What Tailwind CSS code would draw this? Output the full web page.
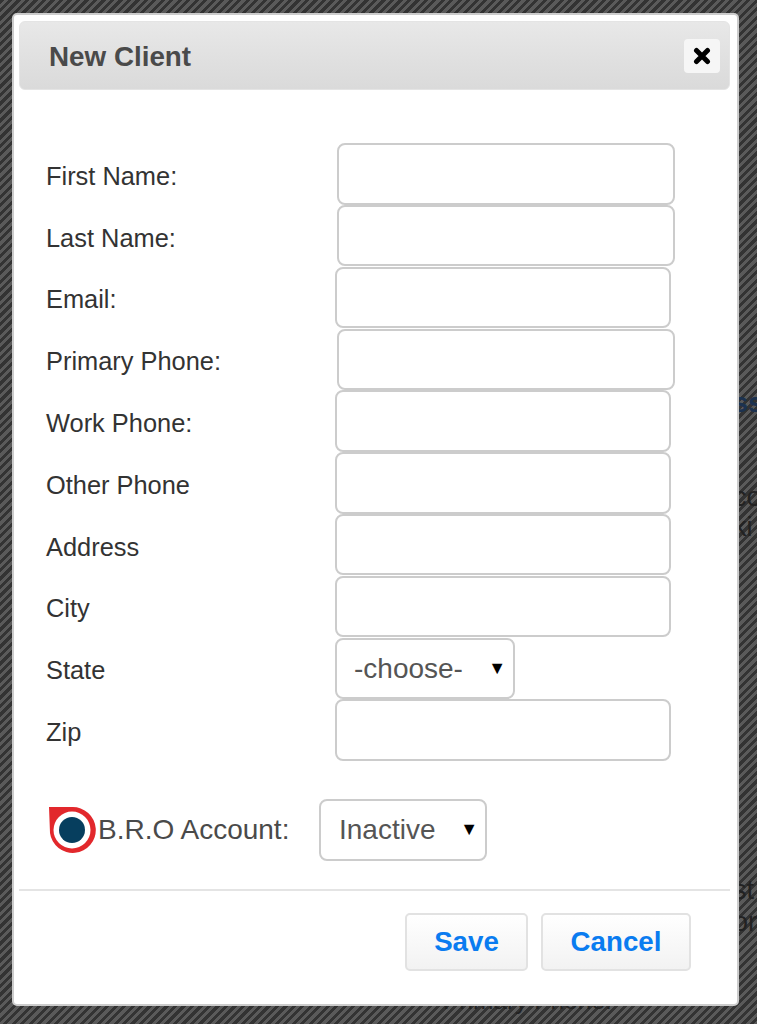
<!DOCTYPE html>
<html lang="en">
<head>
    <meta charset="UTF-8">
    <meta name="viewport" content="width=device-width, initial-scale=1.0">
    <title>New Client</title>
    <script src="https://cdn.jsdelivr.net/npm/@tailwindcss/browser@4"></script>
</head>
<body class="relative h-[1024px] overflow-hidden font-['Liberation_Sans',Arial,sans-serif] bg-[repeating-linear-gradient(135deg,#333_0,#333_3px,#5a5a5a_3px,#5a5a5a_6px)]">

    <!-- page text showing behind the overlay -->
    <span class="absolute left-[733px] top-[383px] text-[27px] font-bold text-[#1c3250]">ss</span>
    <span class="absolute left-[733px] top-[477px] text-[27px] text-[#222]">co</span>
    <span class="absolute left-[733px] top-[507px] text-[27px] text-[#222]">ki</span>
    <span class="absolute left-[733px] top-[870px] text-[27px] text-[#222]">st</span>
    <span class="absolute left-[733px] top-[902px] text-[27px] text-[#222]">or</span>
    <span class="absolute left-[443px] top-[983px] text-[24.500px] text-[#222]">Primary Phone:</span>

    <!-- Modal -->
    <div class="relative ml-[12px] mt-[13px] w-[727px] h-[993px] bg-white border-2 border-[#ccc] rounded-[5px] pt-[6px] pl-[5px] pr-[7px]">

        <!-- Header -->
        <div class="flex items-center justify-between h-[69px] pl-[29px] pr-[9px] rounded-[6px] border border-[#e4e4e4] bg-linear-to-b from-[#e8e8e8] to-[#dadada]">
            <h2 class="pt-[2px] text-[27.800px] font-bold text-[#4a4a4a]">New Client</h2>
            <button class="flex items-center justify-center w-[36px] h-[34px] rounded-[4px] bg-[#f6f6f6]">
                <svg width="18" height="18" viewBox="0 0 18 18"><path d="M3.5 3.5 L14.5 14.5 M14.5 3.5 L3.5 14.5" stroke="#000" stroke-width="5" stroke-linecap="round"/></svg>
            </button>
        </div>

        <!-- Form -->
        <div class="pl-[27px] pt-[53px] text-[25.400px] text-[#333]">
            <div class="flex items-center h-[61.8px]">
                <label class="w-[291px] pt-[4px]">First Name:</label>
                <input type="text" class="w-[338px] h-[61.500px] bg-white border-2 border-[#ccc] rounded-[8px]">
            </div>
            <div class="flex items-center h-[61.8px]">
                <label class="w-[291px] pt-[4px]">Last Name:</label>
                <input type="text" class="w-[338px] h-[61.500px] bg-white border-2 border-[#ccc] rounded-[8px]">
            </div>
            <div class="flex items-center h-[61.8px]">
                <label class="w-[289px] pt-[4px]">Email:</label>
                <input type="text" class="w-[336px] h-[61.500px] bg-white border-2 border-[#ccc] rounded-[8px]">
            </div>
            <div class="flex items-center h-[61.8px]">
                <label class="w-[291px] pt-[4px]">Primary Phone:</label>
                <input type="text" class="w-[338px] h-[61.500px] bg-white border-2 border-[#ccc] rounded-[8px]">
            </div>
            <div class="flex items-center h-[61.8px]">
                <label class="w-[289px] pt-[4px]">Work Phone:</label>
                <input type="text" class="w-[336px] h-[61.500px] bg-white border-2 border-[#ccc] rounded-[8px]">
            </div>
            <div class="flex items-center h-[61.8px]">
                <label class="w-[289px] pt-[4px]">Other Phone</label>
                <input type="text" class="w-[336px] h-[61.500px] bg-white border-2 border-[#ccc] rounded-[8px]">
            </div>
            <div class="flex items-center h-[61.8px]">
                <label class="w-[289px] pt-[4px]">Address</label>
                <input type="text" class="w-[336px] h-[61.500px] bg-white border-2 border-[#ccc] rounded-[8px]">
            </div>
            <div class="flex items-center h-[61.8px]">
                <label class="w-[289px] pt-[4px]">City</label>
                <input type="text" class="w-[336px] h-[61.500px] bg-white border-2 border-[#ccc] rounded-[8px]">
            </div>
            <div class="flex items-center h-[61.8px]">
                <label class="w-[289px] pt-[4px]">State</label>
                <div class="flex items-center justify-between w-[180px] h-[61.500px] pl-[17px] pr-[7px] border-2 border-[#ccc] rounded-[8px] text-[#555] text-[28px]">
                    <span class="pt-[1px]">-choose-</span>
                    <span class="text-[18px] text-black">▼</span>
                </div>
            </div>
            <div class="flex items-center h-[61.8px]">
                <label class="w-[289px] pt-[4px]">Zip</label>
                <input type="text" class="w-[336px] h-[61.500px] bg-white border-2 border-[#ccc] rounded-[8px]">
            </div>

            <!-- B.R.O Account -->
            <div class="flex items-center mt-[38px] ml-[1px] h-[62px] text-[#4a4a4a] text-[28px]">
                <svg width="51" height="50" viewBox="0 0 51 50" class="shrink-0">
                    <path d="M2 2 H25 A23 23 0 1 1 3 28 Z" fill="#e2282c"/>
                    <circle cx="25" cy="25" r="18.500" fill="#fff"/>
                    <circle cx="25" cy="25" r="13" fill="#063e5e"/>
                </svg>
                <span class="w-[221px]">B.R.O Account:</span>
                <div class="flex items-center justify-between w-[168px] h-[62px] pl-[18px] pr-[7px] border-2 border-[#ccc] rounded-[8px] text-[#555]">
                    <span>Inactive</span>
                    <span class="text-[18px] text-black">▼</span>
                </div>
            </div>
        </div>

        <!-- Footer -->
        <div class="mt-[28px] border-t-2 border-[#e4e4e4] flex justify-end gap-[13px] pt-[22px] pr-[39px]">
            <button class="w-[123px] h-[58px] rounded-[5px] border-2 border-[#e2e2e2] bg-linear-to-b from-white to-[#f2f2f2] text-[27.700px] font-bold text-[#0a7cf0]">Save</button>
            <button class="w-[150px] h-[58px] rounded-[5px] border-2 border-[#e2e2e2] bg-linear-to-b from-white to-[#f2f2f2] text-[27.700px] font-bold text-[#0a7cf0]">Cancel</button>
        </div>
    </div>

</body>
</html>
